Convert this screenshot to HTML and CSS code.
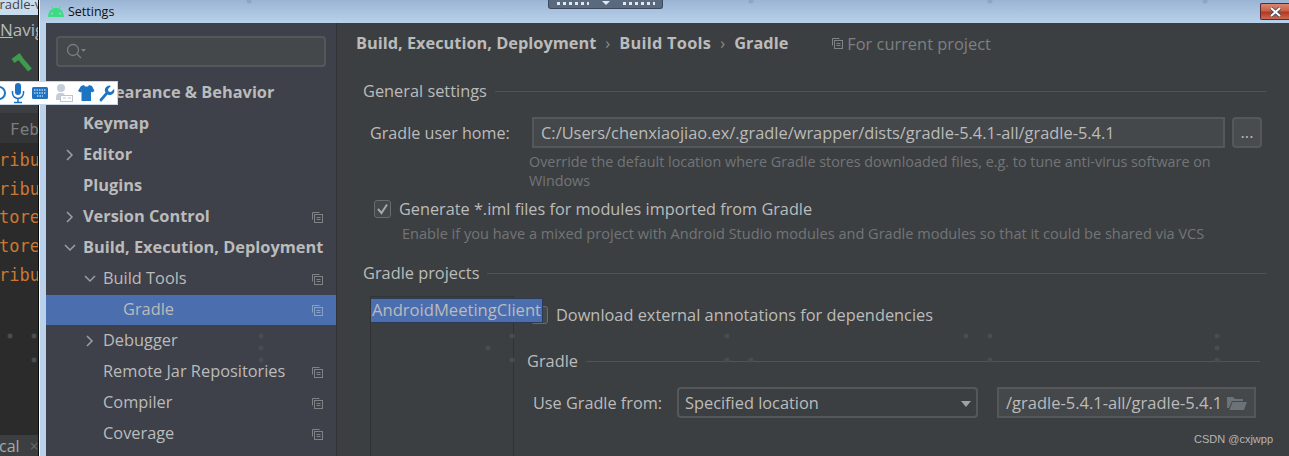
FILE: index.html
```html
<!DOCTYPE html>
<html lang="en">
<head>
<meta charset="utf-8">
<title>Settings</title>
<link rel="stylesheet" href="styles.css">
</head>
<body>
<svg class="defs" width="0" height="0">
  <symbol id="proj" viewBox="0 0 12 12">
    <path d="M1.5 8.5V1.5H8.500" fill="none" stroke="currentColor"/>
    <rect x="3.500" y="3.500" width="8" height="8" fill="none" stroke="currentColor"/>
    <path d="M5.500 6.500h4M5.500 8.500h4" stroke="currentColor"/>
  </symbol>
</svg>

<div class="ide">
  <div class="ide-title">Gradle-v</div>
  <div class="ide-menu"><u>N</u>avig</div>
  <div class="ide-tool">
    <svg width="22" height="20" viewBox="0 0 22 20"><path d="M2 9 10 3M8 5 19 18" fill="none" stroke="#3f9a50" stroke-width="5"/></svg>
  </div>
  <div class="ide-tab">Feb</div>
  <div class="ide-code">
    <div>ribu</div><div>ribu</div><div>tore</div><div>tore</div><div>ribu</div>
  </div>
  <div class="ide-bottom">cal<span class="ide-x">×</span></div>
</div>

<div class="window">
  <header class="titlebar">
    <svg class="droid" width="16" height="11" viewBox="0 0 16 11"><path fill-rule="evenodd" d="M0 11C0 7 2 4 4.500 2.800L3.200.5l.6-.4L5.200 2.400a7 7 0 0 1 5.600 0L12.200.1l.6.4-1.300 2.300C14 4 16 7 16 11zM4 6.500a1 1 0 1 0 .01 0zM12 6.500a1 1 0 1 0 .01 0z" fill="#3ddc84"/></svg>
    <span>Settings</span>
  </header>
  <div class="panes">
    <aside class="sidebar">
      <div class="search">
        <svg width="20" height="18" viewBox="0 0 20 18"><circle cx="7" cy="7" r="5.500" fill="none" stroke="#7b7e82" stroke-width="1.300"/><path d="m11 11 4 4" stroke="#7b7e82" stroke-width="1.300"/><path d="M15 6h5l-2.500 3z" fill="#7b7e82"/></svg>
      </div>
      <ul class="tree">
        <li class="row b l0">Appearance &amp; Behavior</li>
        <li class="row b l0">Keymap</li>
        <li class="row b l0"><svg class="arr"><path d="M3 1l5 5-5 5"/></svg>Editor</li>
        <li class="row b l0">Plugins</li>
        <li class="row b l0"><svg class="arr"><path d="M3 1l5 5-5 5"/></svg>Version Control<svg class="pi"><use href="#proj"/></svg></li>
        <li class="row b l0"><svg class="arr"><path d="M1 3l5 5 5-5"/></svg>Build, Execution, Deployment</li>
        <li class="row l1"><svg class="arr"><path d="M1 3l5 5 5-5"/></svg>Build Tools<svg class="pi"><use href="#proj"/></svg></li>
        <li class="row l2 sel">Gradle<svg class="pi"><use href="#proj"/></svg></li>
        <li class="row l1"><svg class="arr"><path d="M3 1l5 5-5 5"/></svg>Debugger</li>
        <li class="row l1">Remote Jar Repositories<svg class="pi"><use href="#proj"/></svg></li>
        <li class="row l1">Compiler<svg class="pi"><use href="#proj"/></svg></li>
        <li class="row l1">Coverage<svg class="pi"><use href="#proj"/></svg></li>
      </ul>
    </aside>
    <main class="content">
      <div class="crumbs">
        <b>Build, Execution, Deployment</b><i>›</i><b class="wide">Build Tools</b><i>›</i><b>Gradle</b>
        <span class="scope"><svg class="pi2"><use href="#proj"/></svg>For current project</span>
      </div>
      <div class="section s-general"><span>General settings</span></div>
      <div class="home">
        <label>Gradle user home:</label>
        <div class="field">C:/Users/chenxiaojiao.ex/.gradle/wrapper/dists/gradle-5.4.1-all/gradle-5.4.1</div>
        <div class="dots">...</div>
      </div>
      <p class="hint h1">Override the default location where Gradle stores downloaded files, e.g. to tune anti-virus software on<br>Windows</p>
      <div class="check">
        <span class="box"><svg width="13" height="12" viewBox="0 0 13 12"><path d="M2 6l3.500 4L11 1.500" fill="none" stroke="#a7a7a7" stroke-width="2"/></svg></span>
        Generate *.iml files for modules imported from Gradle
      </div>
      <p class="hint h2">Enable if you have a mixed project with Android Studio modules and Gradle modules so that it could be shared via VCS</p>
      <div class="section s-projects"><span>Gradle projects</span></div>
      <div class="split">
        <div class="ptree"></div>
        <div class="pdetail">
          <div class="download"><span class="box"></span>Download external annotations for dependencies</div>
          <div class="section s-gradle"><span>Gradle</span></div>
          <div class="use">
            <label>Use Gradle from:</label>
            <div class="select">Specified location<span class="caret"></span></div>
            <div class="path">
              <span class="path-text">/gradle-5.4.1-all/gradle-5.4.1</span>
              <svg width="20" height="15" viewBox="0 0 20 15"><path d="M0 2h6l2 2h8v2H5L2 13H0z" fill="#6c7378"/><path d="M5.500 7H20l-3 8H2.500z" fill="#6c7378"/></svg>
            </div>
          </div>
        </div>
      </div>
    </main>
  </div>
  <div class="selected-item">AndroidMeetingClient</div>
  <button class="close" aria-label="Close">
    <svg width="13" height="10" viewBox="0 0 13 10"><path d="M2 1l9 8M11 1 2 9" stroke="#3f4a5c" stroke-width="3.600"/><path d="M2 1l9 8M11 1 2 9" stroke="#fff" stroke-width="2"/></svg>
  </button>
</div>

<div class="ctrlbar">
  <span class="bar-dots"></span><span class="bar-arrow"></span><span class="bar-dots"></span>
</div>

<div class="ime">
  <svg width="118" height="22" viewBox="0 0 118 22" fill="#1e73c2">
    <circle cx="-1" cy="11" r="6" fill="none" stroke="#1e73c2" stroke-width="2"/>
    <rect x="15" y="1" width="6" height="12" rx="3"/>
    <path d="M12.500 9v2a5.500 5.500 0 0 0 11 0V9M18 16.500v3.500M14 20.500h8" fill="none" stroke="#1e73c2" stroke-width="1.500"/>
    <rect x="32" y="5" width="16" height="12" rx="1.500"/>
    <path d="M34 8h12M34 11h12M37 14h6" stroke="#fff" stroke-dasharray="1.500 1"/>
    <circle cx="61" cy="6" r="4" fill="#c5cdd8"/>
    <path d="M56 18v-3a4 4 0 0 1 4-4h3l2 2h-5v5z" fill="#c5cdd8"/>
    <rect x="60.500" y="13.500" width="12" height="6" fill="#fff" stroke="#bcc6d2"/>
    <path d="M63 16h3M68 16h3" stroke="#bcc6d2"/>
    <path d="M81 4l3-1 1 1.500h3L89 3l3 1 2.500 5-2.500 1.500-1-1V19H81.500V9.500l-1 1L78 9z"/>
    <path d="M99.500 17.500l6-7a4.500 4.500 0 0 1 5.500-6.500l-3 3 .5 2.500 2.500.5 3-3a4.500 4.500 0 0 1-6.500 5.500l-6 7q-2 .5-2-2z"/>
  </svg>
</div>

<svg class="specks" width="1289" height="456">
  <g fill="#4a4d50">
    <circle cx="10" cy="336" r="2.500"/><circle cx="34" cy="336" r="2.500"/><circle cx="34" cy="360" r="2.500"/>
    <circle cx="261" cy="336" r="2.500"/><circle cx="261" cy="348" r="2.500"/><circle cx="261" cy="360" r="2.500"/>
    <circle cx="512" cy="336" r="2.500"/><circle cx="488" cy="348" r="2.500"/><circle cx="512" cy="360" r="2.500"/>
    <circle cx="727" cy="336" r="2.500"/><circle cx="727" cy="360" r="2.500"/><circle cx="751" cy="360" r="2.500"/>
    <circle cx="966" cy="336" r="2.500"/><circle cx="990" cy="336" r="2.500"/><circle cx="990" cy="360" r="2.500"/>
    <circle cx="1217" cy="336" r="2.500"/><circle cx="1217" cy="348" r="2.500"/><circle cx="1217" cy="360" r="2.500"/>
  </g>
  <g fill="#8ea6c2">
    <circle cx="249" cy="1" r="2.500"/><circle cx="751" cy="1" r="2.500"/><circle cx="990" cy="1" r="2.500"/><circle cx="1205" cy="1" r="2.500"/>
  </g>
</svg>

<div class="watermark">CSDN @cxjwpp</div>
</body>
</html>
```
FILE: styles.css
```css
* { box-sizing: border-box; }
html, body { margin: 0; height: 456px; overflow: hidden; }
body {
  display: flex;
  width: 1289px;
  position: relative;
  font-family: "Open Sans", "Liberation Sans", sans-serif;
  font-size: 16.350px;
  color: #bbbbbb;
  background: #3c3f41;
}
.defs { position: absolute; }

/* IDE behind the dialog */
.ide {
  width: 39px;
  height: 456px;
  flex: none;
  display: flex;
  flex-direction: column;
  background: #2b2b2b;
  border-right: 1px solid #0c0c0c;
  overflow: hidden;
  white-space: nowrap;
}
.ide-title { height: 15px; background: #c9dcee; color: #444; font-size: 13px; line-height: 9px; margin-left: -10px; padding-left: 0; }
.ide-menu { height: 28px; background: #3c3f41; color: #b6b9bb; font-size: 17px; line-height: 30px; }
.ide-tool { height: 70px; background: #3c3f41; padding: 9px 0 0 11px; }
.ide-tab { height: 30px; background: #333537; color: #7d7d7d; font-family: "DejaVu Sans Mono", monospace; font-size: 16px; line-height: 34px; padding-left: 10px; }
.ide-code {
  flex: 1;
  padding-top: 3px;
  color: #cc7832;
  font-family: "DejaVu Sans Mono", monospace;
  font-size: 17px;
  line-height: 28.700px;
  margin-left: -1px;
}
.ide-bottom { height: 21px; background: #3c3f41; font-size: 16px; line-height: 22px; margin-left: -1px; color: #a9a9a9; }
.ide-x { color: #666; margin-left: 10px; }

/* Dialog window */
.window {
  flex: 1;
  position: relative;
  display: flex;
  flex-direction: column;
  border-left: 1px solid #fff;
  background: #b9d1ea;
  padding-left: 6px;
}
.titlebar {
  height: 23px;
  margin-left: -6px;
  padding-left: 8px;
  display: flex;
  align-items: center;
  gap: 4px;
  flex: none;
  font-size: 12.500px;
  color: #111;
  background: linear-gradient(#9ab5d4, #b9d1ea);
}
.panes { flex: 1; display: flex; min-height: 0; }

/* Sidebar */
.sidebar { width: 291px; flex: none; background: #3e4149; border-right: 1px solid #323232; padding-top: 13px; }
.search {
  height: 31px;
  margin: 0 10px 0 10px;
  border: 2px solid #55585a;
  border-radius: 4px;
  background: #45484a;
  padding: 5px 0 0 8px;
}
.tree { list-style: none; margin: 10px 0 0; padding: 0; }
.row {
  position: relative;
  height: 31px;
  line-height: 30px;
  white-space: nowrap;
}
.row.b { font-weight: 700; }
.l0 { padding-left: 37px; }
.l1 { padding-left: 57px; }
.l2 { padding-left: 77px; }
.sel { background: #4b6eaf; border-top: 1px solid #3e4149; line-height: 28px; }
.arr {
  position: absolute;
  top: 10px;
  width: 12px;
  height: 12px;
  fill: none;
  stroke: #9c9fa2;
  stroke-width: 1.500;
}
.l0 .arr { left: 18px; }
.l1 .arr { left: 38px; }
.pi, .pi2 { width: 12px; height: 12px; color: #7f8386; }
.pi { position: absolute; right: 13px; top: 10px; }
.sel .pi { top: 9px; color: #8ba0c6; }

/* Main content */
.content { flex: 1; min-width: 0; background: #3c3f41; padding-left: 19px; display: flex; flex-direction: column; }
.crumbs { height: 40px; flex: none; display: flex; align-items: center; white-space: nowrap; }
.crumbs b { font-weight: 700; }
.crumbs .wide { letter-spacing: .27px; }
.crumbs i { font-style: normal; color: #8c8c8c; margin: 0 9px; }
.scope { display: flex; align-items: center; gap: 4px; color: #7d8082; margin-left: 43px; font-size: 16.400px; }

.section {
  display: flex;
  align-items: center;
  gap: 8px;
  white-space: nowrap;
  height: 22px;
  flex: none;
}
.section span { line-height: 22px; }
.section::after { content: ""; flex: 1; height: 1px; background: #515456; }
.s-general { margin: 17px 23px 0 7px; }
.home { display: flex; align-items: center; margin: 15px 0 0 14px; height: 31px; flex: none; }
.home label { width: 162px; flex: none; font-size: 16.150px; }
.field {
  width: 693px;
  height: 31px;
  border: 2px solid #55585a;
  background: #45484a;
  padding-left: 7px;
  font-size: 16.400px;
  line-height: 27px;
  white-space: nowrap;
}
.dots {
  width: 30px;
  height: 31px;
  margin-left: 7px;
  background: #494c4e;
  border: 2px solid #55585a;
  border-radius: 4px;
  text-align: center;
  line-height: 26px;
}
.hint { margin: 0; color: #727578; line-height: 19px; white-space: nowrap; flex: none; }
.h1 { margin: 4px 0 0 173px; font-size: 14.370px; }
.check { display: flex; align-items: center; gap: 8px; margin: 9px 0 0 18px; height: 20px; white-space: nowrap; flex: none; font-size: 16.280px; }
.box {
  width: 17px;
  height: 18px;
  flex: none;
  border: 1px solid #6b6b6b;
  border-radius: 3px;
  background: #43494a;
  display: flex;
  align-items: center;
  justify-content: center;
}
.h2 { margin: 5px 0 0 46px; font-size: 14.550px; }
.s-projects { margin: 19px 23px 0 7px; }
.split { display: flex; margin: 12px 0 0 14px; flex: 1; min-height: 0; }
.ptree { width: 144px; flex: none; border-left: 1px solid #2f3133; border-right: 1px solid #2f3133; border-top: 1px solid #323436; }
.pdetail { flex: 1; min-width: 0; padding-left: 13px; }
.download { display: flex; align-items: center; gap: 8px; margin: 8px 0 0 4px; height: 22px; line-height: 22px; white-space: nowrap; }
.s-gradle { margin: 24px 29px 0 0; }
.use { display: flex; align-items: center; margin: 15px 0 0 6px; height: 31px; }
.use label { width: 144px; flex: none; white-space: nowrap; font-size: 16.250px; }
.select {
  position: relative;
  width: 301px;
  height: 31px;
  border: 2px solid #55585a;
  border-radius: 4px;
  padding-left: 6px;
  line-height: 29px;
}
.caret {
  position: absolute;
  right: 5px;
  top: 12px;
  border-left: 5px solid transparent;
  border-right: 5px solid transparent;
  border-top: 6px solid #a0a3a5;
}
.path {
  width: 259px;
  height: 31px;
  margin-left: 19px;
  border: 2px solid #55585a;
  background: #45484a;
  display: flex;
  align-items: center;
  padding: 0 7px 0 7px;
  justify-content: space-between;
  white-space: nowrap;
  font-size: 16.500px;
}

/* Overlays */
.selected-item {
  position: absolute;
  left: 331px;
  top: 298px;
  width: 172px;
  height: 25px;
  background: #4b6eaf;
  border: 1px solid #2d3a55;
  border-left: 0;
  font-size: 16.600px;
  line-height: 22px;
  padding-left: 1px;
  white-space: nowrap;
  overflow: hidden;
}
.close {
  position: absolute;
  right: 0;
  top: 3px;
  width: 29px;
  height: 17px;
  padding: 0;
  border: 1px solid #5a2a3a;
  border-right: 0;
  border-radius: 2px 0 0 2px;
  background: linear-gradient(#d88670 0, #c9614a 45%, #b13a1f 55%, #c96a50 100%);
  display: flex;
  align-items: center;
  justify-content: center;
}
.ctrlbar {
  position: absolute;
  left: 548px;
  top: 0;
  width: 115px;
  height: 9px;
  background: #59697e;
  border: 1px solid #3e4a5c;
  border-top: 0;
  border-radius: 0 0 3px 3px;
  display: flex;
  justify-content: center;
  align-items: flex-start;
  gap: 13px;
  padding-top: 1px;
}
.bar-dots {
  width: 32px;
  height: 3px;
  margin-top: 1px;
  background: repeating-linear-gradient(90deg, #e4e8ee 0 3px, transparent 3px 6px);
}
.bar-arrow {
  border-left: 4px solid transparent;
  border-right: 4px solid transparent;
  border-top: 4px solid #e4e8ee;
}
.ime {
  position: absolute;
  left: 0;
  top: 81px;
  width: 118px;
  height: 24px;
  background: #fff;
  border: 1px solid #c6d6e6;
  border-left: 0;
  overflow: hidden;
}
.ime svg { display: block; }
.specks { position: absolute; left: 0; top: 0; pointer-events: none; }
.watermark {
  position: absolute;
  left: 1194px;
  top: 431px;
  font-family: "Liberation Sans", sans-serif;
  font-size: 11px;
  line-height: 16px;
  color: #b4b6b8;
  white-space: nowrap;
}
```
